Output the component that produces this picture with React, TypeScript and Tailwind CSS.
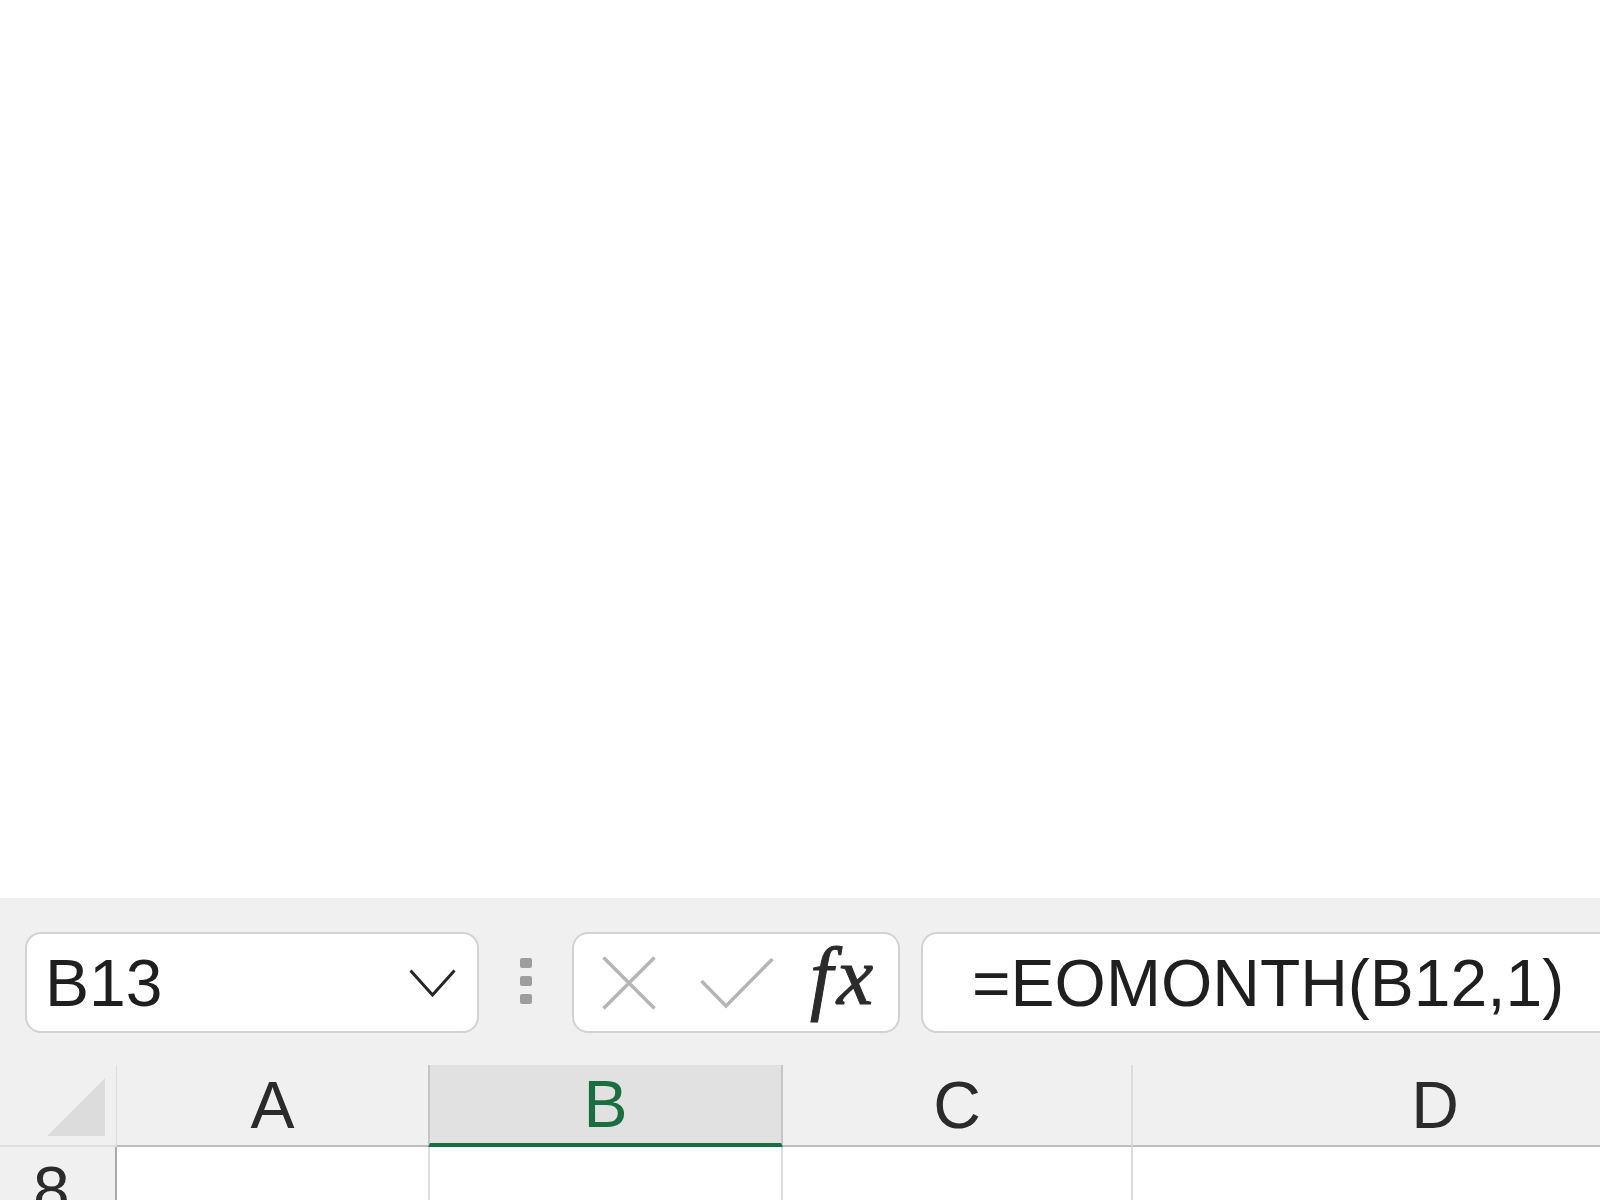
export default function App() {
  return (
    <div className="w-[1600px] h-[1200px] overflow-hidden bg-white flex flex-col font-['Liberation_Sans',Arial,sans-serif] text-[#1f1f1f]">
      <div className="h-[898px] shrink-0" />

      {/* formula bar */}
      <div className="h-[167px] shrink-0 bg-[#f0f0f0] flex items-start pt-[34px] pl-[25px]">
        <div className="w-[454px] h-[101px] shrink-0 rounded-[16px] border-2 border-[#d2d2d2] bg-white flex items-center justify-between pl-[18px] pr-[21px]">
          <span className="text-[66px] leading-none">B13</span>
          <svg width="47" height="28" viewBox="0 0 47 28" fill="none">
            <path d="M1.5 1.5 L23.5 26 L45.5 1.5" stroke="#262626" strokeWidth="3" />
          </svg>
        </div>

        <div className="ml-[41px] mt-[26px] flex flex-col gap-[8px] shrink-0">
          <div className="w-[12px] h-[10px] rounded-[2px] bg-[#9d9d9d]" />
          <div className="w-[12px] h-[10px] rounded-[2px] bg-[#9d9d9d]" />
          <div className="w-[12px] h-[10px] rounded-[2px] bg-[#9d9d9d]" />
        </div>

        <div className="ml-[40px] w-[328px] h-[101px] shrink-0 rounded-[16px] border-2 border-[#d2d2d2] bg-white flex items-center">
          <svg className="ml-[28px]" width="54" height="54" viewBox="0 0 54 54" fill="none">
            <path d="M1.5 1.5 L52.5 52.5 M52.5 1.5 L1.5 52.5" stroke="#b5b5b5" strokeWidth="3.5" />
          </svg>
          <svg className="ml-[44px]" width="74" height="52" viewBox="0 0 74 52" fill="none">
            <path d="M1.5 24 L26 49 L72.5 2" stroke="#b5b5b5" strokeWidth="3.5" />
          </svg>
          <span className="ml-[36px] mb-[12px] font-['Liberation_Serif',serif] italic text-[82px] leading-none tracking-[4px] text-[#2b2b2b] [-webkit-text-stroke:1px_#2b2b2b]">
            fx
          </span>
        </div>

        <div className="ml-[21px] w-[800px] h-[101px] shrink-0 rounded-l-[16px] border-2 border-r-0 border-[#d2d2d2] bg-white flex items-center pl-[49px]">
          <span className="text-[66px] leading-none whitespace-nowrap">=EOMONTH(B12,1)</span>
        </div>
      </div>

      {/* column headers */}
      <div className="h-[82px] shrink-0 flex bg-[#f0f0f0] text-[66px] leading-none text-[#2b2b2b]">
        <div className="relative w-[117px] shrink-0 border-r border-b-2 border-[#dddddd]">
          <svg className="absolute left-[47px] top-[13px]" width="58" height="58" viewBox="0 0 58 58">
            <path d="M58 0 L58 58 L0 58 Z" fill="#dcdcdc" />
          </svg>
        </div>
        <div className="w-[311px] shrink-0 flex items-center justify-center border-b-2 border-[#bdbdbd]">A</div>
        <div className="w-[355px] shrink-0 flex items-center justify-center bg-[#e1e1e1] border-l-2 border-r-2 border-[#c6c6c6] border-b-4 border-b-[#1b6e3f] text-[#1b6e3f]">
          B
        </div>
        <div className="w-[350px] shrink-0 flex items-center justify-center border-r-2 border-r-[#dcdcdc] border-b-2 border-b-[#bdbdbd]">C</div>
        <div className="w-[604px] shrink-0 flex items-center justify-center border-b-2 border-[#bdbdbd]">D</div>
      </div>

      {/* row 8 */}
      <div className="h-[86px] shrink-0 flex text-[66px] leading-none">
        <div className="w-[117px] shrink-0 bg-[#f0f0f0] border-r-2 border-[#a8a8a8] flex items-center pl-[33px] text-[#2b2b2b]">8</div>
        <div className="w-[311px] shrink-0 bg-white" />
        <div className="w-[355px] shrink-0 bg-white border-l-2 border-r-2 border-[#dedede]" />
        <div className="w-[350px] shrink-0 bg-white border-r-2 border-[#dedede]" />
        <div className="w-[604px] shrink-0 bg-white" />
      </div>
    </div>
  );
}
